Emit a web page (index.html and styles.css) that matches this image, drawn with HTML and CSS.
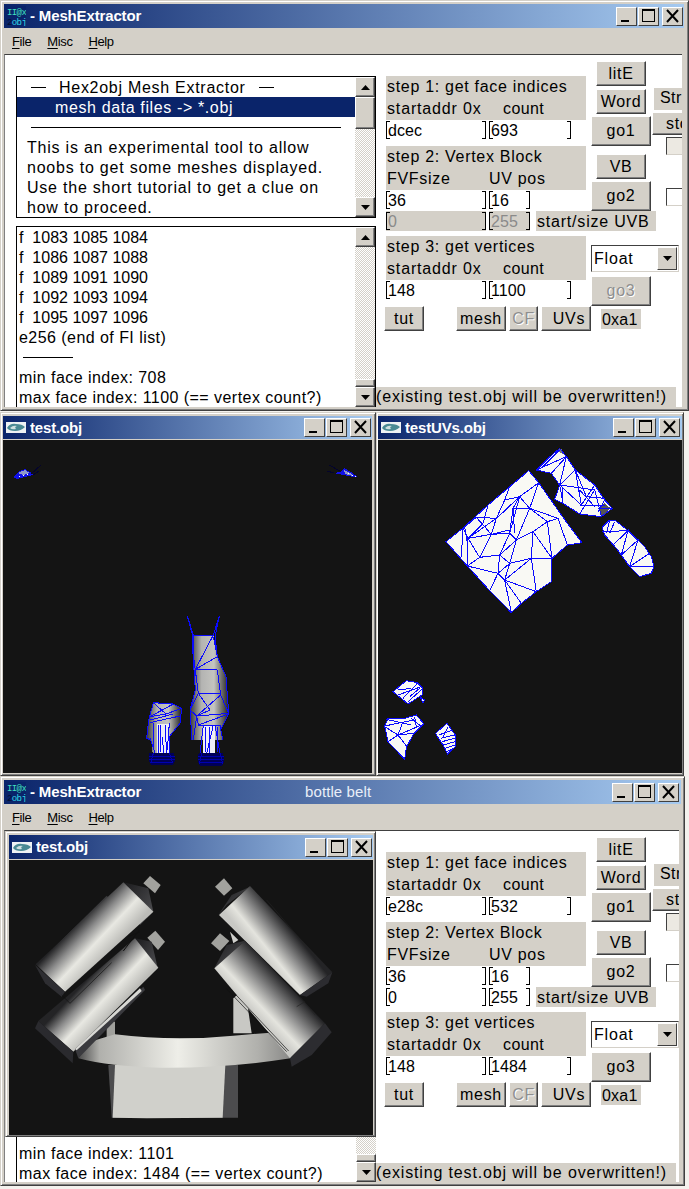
FILE: index.html
```html
<!DOCTYPE html>
<html lang="en">
<head>
<meta charset="utf-8">
<title>MeshExtractor</title>
<link rel="stylesheet" href="styles.css">
</head>
<body>
<svg class="defs" width="0" height="0" aria-hidden="true">
  <defs>
    <linearGradient id="legA" x1="0" x2="1" y1="0" y2="0"><stop offset="0" stop-color="#3a3a3a"/><stop offset=".3" stop-color="#b4b4b2"/><stop offset=".62" stop-color="#c4c4c0"/><stop offset="1" stop-color="#202020"/></linearGradient>
    <linearGradient id="bot1" gradientUnits="userSpaceOnUse" x1="235" y1="440" x2="330" y2="530"><stop offset="0" stop-color="#242426"/><stop offset=".3" stop-color="#8a8a8a"/><stop offset=".62" stop-color="#e8e8e2"/><stop offset="1" stop-color="#bcbcb8"/></linearGradient>
    <linearGradient id="bot2" gradientUnits="userSpaceOnUse" x1="257" y1="619" x2="347" y2="704"><stop offset="0" stop-color="#242426"/><stop offset=".3" stop-color="#8a8a8a"/><stop offset=".62" stop-color="#e8e8e2"/><stop offset="1" stop-color="#bcbcb8"/></linearGradient>
    <linearGradient id="bot3" gradientUnits="userSpaceOnUse" x1="873" y1="463" x2="778" y2="540"><stop offset="0" stop-color="#242426"/><stop offset=".4" stop-color="#8a8a8a"/><stop offset=".75" stop-color="#e4e4de"/><stop offset="1" stop-color="#c8c8c4"/></linearGradient>
    <linearGradient id="bot4" gradientUnits="userSpaceOnUse" x1="855" y1="621" x2="756" y2="715"><stop offset="0" stop-color="#242426"/><stop offset=".4" stop-color="#8a8a8a"/><stop offset=".75" stop-color="#e4e4de"/><stop offset="1" stop-color="#c8c8c4"/></linearGradient>
    <linearGradient id="belt" gradientUnits="userSpaceOnUse" x1="235" y1="0" x2="870" y2="0"><stop offset="0" stop-color="#4a4a4a"/><stop offset=".1" stop-color="#b0b0ac"/><stop offset=".47" stop-color="#eeeee8"/><stop offset=".85" stop-color="#b0b0ac"/><stop offset="1" stop-color="#8a8a88"/></linearGradient>
    <linearGradient id="cap" x1="0" x2="1" y1="0" y2="1"><stop offset="0" stop-color="#1a1a1c"/><stop offset="1" stop-color="#555558"/></linearGradient>
    <symbol id="obj-icon" viewBox="0 0 20 11"><rect width="20" height="11" fill="#eef2f4"/><path d="M1 6 Q4 1 10 2 Q16 2 19 5 Q15 9 9 9 Q3 9 1 6Z" fill="#4a8a94"/><path d="M4 6 Q7 3 11 4 Q8 5 10 7 Q6 8 4 6Z" fill="#cfe0e0"/></symbol>
    <symbol id="app-icon" viewBox="0 0 20 20"><rect width="20" height="20" fill="#0a246a"/><text x="1" y="9" class="icon-text hi">II@x</text><text x="1" y="19" class="icon-text lo"><tspan class="icon-dark">2</tspan>obj</text></symbol>
    <symbol id="up" viewBox="0 0 9 5"><path d="M4.5 0 L9 5 H0Z"/></symbol>
    <symbol id="down" viewBox="0 0 9 5"><path d="M0 0 H9 L4.5 5Z"/></symbol>
    <symbol id="ic-min" viewBox="0 0 19 17"><rect x="4" y="12" width="8" height="2"/></symbol>
    <symbol id="ic-max" viewBox="0 0 19 17"><path d="M3 1H16V14H3ZM4 3V13H15V3Z" fill-rule="evenodd"/></symbol>
    <symbol id="ic-close" viewBox="0 0 19 17"><path d="M4 2 L15 14 M15 2 L4 14" stroke="#000" stroke-width="2" fill="none"/></symbol>
  </defs>
</svg>

<div class="desktop">

<section class="win win-top">
  <header class="titlebar tall">
    <svg class="app-ico"><use href="#app-icon"/></svg>
    <span class="title-text">- MeshExtractor</span>
    <span class="winbtns"><button class="wb"><svg><use href="#ic-min"/></svg></button><button class="wb"><svg><use href="#ic-max"/></svg></button><button class="wb wb-close"><svg><use href="#ic-close"/></svg></button></span>
  </header>
  <nav class="menubar"><span><u>F</u>ile</span><span><u>M</u>isc</span><span><u>H</u>elp</span></nav>
  <div class="client">
    <div class="lists">
      <div class="listbox lb-intro">
        <div class="lb-body">
          <div class="ln ln-head"><span class="dash"></span>Hex2obj Mesh Extractor<span class="dash dash-r"></span></div>
          <div class="ln ln-sel">mesh data files -&gt; *.obj</div>
          <div class="ln ln-rule"><span></span></div>
          <div class="ln ln-indent">This is an experimental tool to allow</div>
          <div class="ln ln-indent">noobs to get some meshes displayed.</div>
          <div class="ln ln-indent">Use the short tutorial to get a clue on</div>
          <div class="ln ln-indent">how to proceed.</div>
        </div>
        <div class="sb">
          <span class="sb-btn"><svg><use href="#up"/></svg></span>
          <span class="sb-thumb th-big"></span>
          <span class="sb-track"></span>
          <span class="sb-btn"><svg><use href="#down"/></svg></span>
        </div>
      </div>
      <div class="listbox lb-log">
        <div class="lb-body">
          <div class="ln ln-num">f&nbsp; 1083 1085 1084</div>
          <div class="ln ln-num">f&nbsp; 1086 1087 1088</div>
          <div class="ln ln-num">f&nbsp; 1089 1091 1090</div>
          <div class="ln ln-num">f&nbsp; 1092 1093 1094</div>
          <div class="ln ln-num">f&nbsp; 1095 1097 1096</div>
          <div class="ln">e256 (end of FI list)</div>
          <div class="ln ln-short"><span></span></div>
          <div class="ln">min face index: 708</div>
          <div class="ln">max face index: 1100 (== vertex count?)</div>
        </div>
        <div class="sb">
          <span class="sb-btn"><svg><use href="#up"/></svg></span>
          <span class="sb-track"></span>
          <span class="sb-thumb th-small"></span>
          <span class="sb-btn"><svg><use href="#down"/></svg></span>
        </div>
      </div>
    </div>
    <div class="form">
      <div class="form-cols">
        <div class="col-a">
          <div class="lbl2"><div>step 1: get face indices</div><div class="pair pair-count"><span>startaddr 0x</span><span>count</span></div></div>
          <div class="inputs"><span class="field f-wide">dcec</span><span class="field f-mid">693</span></div>
          <div class="lbl2 gap6"><div>step 2: Vertex Block</div><div class="pair"><span>FVFsize</span><span>UV pos</span></div></div>
          <div class="inputs"><span class="field f-wide">36</span><span class="field f-small">16</span></div>
          <div class="inputs gap1"><span class="field f-wide off">0</span><span class="field f-small off">255</span><span class="lbl-uvb">start/size UVB</span></div>
          <div class="lbl2 gap5"><div>step 3: get vertices</div><div class="pair pair-count"><span>startaddr 0x</span><span>count</span></div></div>
          <div class="inputs"><span class="field f-wide">148</span><span class="field f-mid">1100</span></div>
          <div class="tools"><button class="btn b-tut">tut</button><button class="btn b-mesh">mesh</button><button class="btn b-cf" disabled>CF</button><button class="btn b-uvs">UVs</button></div>
        </div>
        <div class="col-b">
          <button class="btn b-small">litE</button>
          <button class="btn b-small mt3">Word</button>
          <button class="btn b-go mt2">go1</button>
          <button class="btn b-small mt8">VB</button>
          <button class="btn b-go mt2">go2</button>
          <div class="combo"><span>Float</span><i><svg><use href="#down"/></svg></i></div>
          <button class="btn b-go mt4" disabled>go3</button>
          <span class="lbl-hex">0xa1</span>
        </div>
        <div class="col-c">
          <span class="flat-str">Str</span>
          <button class="btn b-st">sto</button>
          <span class="check"></span>
          <span class="check check-2"></span>
        </div>
      </div>
      <div class="notice">(existing test.obj will be overwritten!)</div>
    </div>
  </div>
</section>

<section class="win win-side win-left">
  <header class="titlebar">
    <svg class="obj-ico"><use href="#obj-icon"/></svg>
    <span class="title-text">test.obj</span>
    <span class="winbtns"><button class="wb"><svg><use href="#ic-min"/></svg></button><button class="wb"><svg><use href="#ic-max"/></svg></button><button class="wb wb-close"><svg><use href="#ic-close"/></svg></button></span>
  </header>
  <div class="viewport">
    <svg class="scene scene-left" viewBox="0 0 369 336">
      <path d="M10 37 L16 31 L22 29 L27 32 L30 35 L22 37 L14 39Z" fill="#1010e8"/>
      <path d="M15 33 L22 30 L27 33 L20 35Z" fill="#9098c8"/>
      <path d="M16 36h1v1h-1z M20 35h1v1h-1z M24 34h1v1h-1z" fill="#fff"/>
      <path d="M28 34 L38 25 M30 35 L36 31" class="wire darkline"/>
      <path d="M355 37 L348 32 L341 28 L337 32 L331 33 L340 35 L350 37Z" fill="#1010e8"/>
      <path d="M341 30 L347 33 L350 36 L342 34Z" fill="#9098c8"/>
      <path d="M345 33h1v1h-1z M349 35h1v1h-1z M352 36h1v1h-1z" fill="#fff"/>
      <path d="M337 31 L326 25 M331 33 L324 31" class="wire darkline"/>
    </svg>
    <svg class="scene scene-legs" viewBox="0 0 360 510">
      <path d="M190 75 H250 L262 140 L288 200 L296 310 L272 360 L278 390 H186 L180 300 L196 240 L190 150Z" fill="url(#legA)"/>
      <path d="M70 278 L130 282 L155 295 L150 340 L118 380 L120 430 H68 L64 390 L50 385 L56 330Z" fill="url(#legA)"/>
      <path d="M80 342 H118 V430 H80Z M218 345 H255 V430 H218Z" fill="#eeeef6"/>
      <path d="M58 430 Q52 464 70 466 H122 Q140 464 132 430Z M206 430 Q198 468 218 469 H268 Q288 468 278 430Z" fill="#000058"/>
      <g class="wire w3">
        <path d="M172 18 L190 75 H250 L268 18 L255 80 L262 140 L288 200 L296 310 L272 360 M172 18 L186 70 L190 150 L196 240 L180 300 L186 390"/>
        <path d="M190 75 L192 150 L205 250 M250 75 L196 178 L262 140 L250 80 M196 178 L262 180 M196 178 L205 250 M262 180 L272 255 M205 250 H272 M205 250 L180 300 M205 250 L240 300 M272 255 L296 310 L200 318 L180 300 M272 255 L200 318 M240 300 L200 318 L205 345 M200 318 L190 390 M296 312 L205 345 M205 345 L270 345 L278 390 M220 345 L210 430 M250 345 L230 430 M255 345 L270 430 M225 350 L225 425 M262 350 L262 425 M240 350 L238 430"/>
        <path d="M70 278 L130 282 L155 295 L150 340 L118 380 L120 430 M70 278 L56 330 L50 385 L64 390 M70 278 L108 312 L60 320 L130 282 M108 312 L155 295 M130 312 L60 330 M60 338 L150 318 M85 345 V430 M70 340 L70 420 M105 345 L110 430 M118 340 L112 420 M60 385 L75 430 M98 380 L100 430 M92 345 L92 425"/>
      </g>
      <g class="wire w3 darkblue">
        <path d="M56 438 H134 M56 448 H134 M60 456 H130 M204 438 H282 M204 448 H282 M208 456 H278 M70 430 L62 460 M118 430 L128 460 M215 430 L208 462 M270 430 L278 462"/>
      </g>
    </svg>
  </div>
</section>

<section class="win win-side win-right">
  <header class="titlebar">
    <svg class="obj-ico"><use href="#obj-icon"/></svg>
    <span class="title-text">testUVs.obj</span>
    <span class="winbtns"><button class="wb"><svg><use href="#ic-min"/></svg></button><button class="wb"><svg><use href="#ic-max"/></svg></button><button class="wb wb-close"><svg><use href="#ic-close"/></svg></button></span>
  </header>
  <div class="viewport">
    <svg class="scene scene-uv" viewBox="0 0 900 1020">
      <g fill="#f9f9f4">
        <path d="M452 92 L482 128 L568 250 L612 308 L568 315 L522 355 L520 425 L475 455 L430 490 L400 518 L335 452 L268 378 L204 305 L260 260 L330 195 L395 140Z"/>
        <path d="M545 25 L565 50 L592 90 L650 135 L680 180 L703 205 L670 230 L605 222 L555 190 L530 178 L545 135 L520 100 L475 90 L510 55Z"/>
        <path d="M695 240 L710 240 L750 272 L800 320 L820 350 L828 378 L820 400 L785 410 L755 380 L715 325 L680 285 L672 262Z"/>
        <path d="M45 755 L85 722 L118 728 L135 745 L132 765 L90 792Z"/>
        <path d="M127 772 L140 780 L135 790Z"/>
        <path d="M20 858 L30 835 L80 835 L115 825 L138 852 L108 880 L85 922 L80 958 L30 905Z"/>
        <path d="M172 880 L207 850 L232 885 L232 920 L208 942 L195 915Z"/>
      </g>
      <path d="M535 30 L550 25 L555 42Z" fill="#777"/>
      <path d="M660 205 L680 190 L698 205 L672 228Z" fill="#555"/>
      <g class="wire w3">
        <path d="M452 92 L482 128 L568 250 L612 308 L568 315 L522 355 L520 425 L475 455 L430 490 L400 518 L335 452 L268 378 L204 305 L260 260 L330 195 L395 140Z"/>
        <path d="M482 128 L425 170 L455 205 L482 128 M425 170 L355 235 L295 232 L255 265 L250 350 M425 170 L405 205 L395 280 L340 283 L270 295 L255 265 M395 140 L380 180 L425 170 L395 280 M380 180 L355 235 L340 283 L305 352 L270 295 L268 378 L305 352 L365 345 L395 280 L415 300 L455 205 L540 235 M455 205 L508 245 L465 275 L415 300 L365 345 L395 370 L415 300 M508 245 L522 355 M465 275 L460 355 L395 370 L360 400 L268 378 M465 275 L522 355 L460 355 L475 455 L380 420 L395 370 M380 420 L360 400 L335 452 M380 420 L400 518 M380 420 L430 490 M460 355 L380 420 M365 345 L360 400 M508 245 L540 235 L568 315 M330 195 L315 250 L270 295 M295 232 L340 283 M405 205 L455 205 M260 260 L268 310 M355 235 L400 195 M270 295 L355 235 M340 283 L395 270 M405 205 L410 280"/>
        <path d="M545 25 L565 50 L592 90 L650 135 L680 180 L703 205 L670 230 L605 222 L555 190 L530 178 L545 135 L520 100 L475 90 L510 55Z"/>
        <path d="M475 90 L565 50 L520 100 M490 85 L545 30 M565 50 L545 135 L592 90 L610 195 L545 135 L650 150 L605 222 L555 190 L545 135 M592 90 L625 170 L680 175 M650 135 L610 195 L680 195 M605 150 L650 200 M650 150 L670 230 M555 140 L552 190 M660 205 L703 205 M680 180 L660 215"/>
        <path d="M695 240 L710 240 L750 272 L800 320 L820 350 L828 378 L820 400 L785 410 L755 380 L715 325 L680 285 L672 262Z"/>
        <path d="M672 275 L750 272 M695 240 L685 280 M705 315 L750 272 L730 345 L780 300 L755 380 L815 340 M755 380 H828 M755 380 L785 410 M710 245 L695 280"/>
        <path d="M45 755 L85 722 L118 728 L135 745 L132 765 L90 792Z M60 765 L130 740 M75 775 L118 730 M90 785 L135 745 M60 750 L100 745 M95 770 L125 745 M127 772 L140 780 L135 790Z"/>
        <path d="M20 858 L30 835 L80 835 L115 825 L138 852 L108 880 L85 922 L80 958 L30 905Z M25 838 L100 855 M20 858 L108 840 M60 885 L138 852 M30 905 L60 885 L85 918 M60 885 L20 860 M60 885 L105 880 M75 845 L60 885 M100 835 L130 860 M110 830 L115 860"/>
        <path d="M172 880 L207 850 L232 885 L232 920 L208 942 L195 915Z M182 885 L225 870 M188 895 L230 885 M192 905 L230 895 M195 915 L232 905 M200 925 L232 915 M205 935 L225 925 M210 860 L195 890"/>
      </g>
    </svg>
  </div>
</section>

<section class="win win-bottom">
  <header class="titlebar tall">
    <svg class="app-ico"><use href="#app-icon"/></svg>
    <span class="title-text">- MeshExtractor</span>
    <span class="title-note">bottle belt</span>
    <span class="winbtns"><button class="wb"><svg><use href="#ic-min"/></svg></button><button class="wb"><svg><use href="#ic-max"/></svg></button><button class="wb wb-close"><svg><use href="#ic-close"/></svg></button></span>
  </header>
  <nav class="menubar"><span><u>F</u>ile</span><span><u>M</u>isc</span><span><u>H</u>elp</span></nav>
  <div class="client">
    <div class="lists lists-b">
      <section class="win win-inner">
        <header class="titlebar">
          <svg class="obj-ico"><use href="#obj-icon"/></svg>
          <span class="title-text">test.obj</span>
          <span class="winbtns"><button class="wb"><svg><use href="#ic-min"/></svg></button><button class="wb"><svg><use href="#ic-max"/></svg></button><button class="wb wb-close"><svg><use href="#ic-close"/></svg></button></span>
        </header>
        <div class="viewport">
          <svg class="scene scene-bottle" viewBox="27 255 1092 825">
            <path d="M700 670 L735 640 L755 775 H700Z" fill="#c8c8c4"/>
            <path d="M690 470 L715 495 L700 505Z" fill="#d0d0cc"/>
            <path d="M320 740 L345 740 V790 H320Z" fill="#a0a09c"/>
            <path d="M325 870 H714 V1028 H335Z" fill="#4c4c4e"/>
            <path d="M345 870 H676 L668 1028 L440 1030 L338 1028Z" fill="#d0d0cb"/>
            <path d="M235 850 L270 800 L345 778 Q520 800 700 782 L850 770 L872 850 Q680 880 480 878 Q330 875 235 850Z" fill="url(#belt)"/>
            <path d="M430 325 L450 303 L482 330 L465 355Z" fill="#a2a29e"/>
            <path d="M442 488 L466 467 L495 500 L474 525Z" fill="#a2a29e"/>
            <path d="M645 335 L672 310 L697 340 L672 362Z" fill="#a2a29e"/>
            <path d="M633 505 L660 475 L688 498 L660 528Z" fill="#a2a29e"/>
            <path d="M370 322 L445 340 L460 410 L420 450Z" fill="url(#cap)"/>
            <path d="M160 520 L320 362 L330 372 L170 530Z" fill="#3a3a3c"/>
            <path d="M370 322 L460 410 L195 650 L107 568Z" fill="url(#bot1)"/>
            <path d="M105 570 L195 650 L185 665 L135 625Z" fill="#2e2e32"/>
            <path d="M405 490 L455 500 L473 578 L440 600Z" fill="url(#cap)"/>
            <path d="M405 490 L475 578 L220 830 L115 738Z" fill="url(#bot2)"/>
            <path d="M115 738 L220 830 L218 865 L105 760Z" fill="#2a2a2e"/>
            <path d="M225 822 L430 635 L435 645 L235 850Z" fill="#3a3a3e"/>
            <path d="M225 822 L420 640 L425 648 L230 826Z" fill="#d8d8d4"/>
            <path d="M185 660 L210 685 L335 563" fill="none" stroke="#111" stroke-width="2"/>
            <path d="M370 528 L418 465 M385 485 L420 470" stroke="#111" stroke-width="3" fill="none"/>
            <path d="M750 335 L695 360 L655 420 L680 390Z" fill="url(#cap)"/>
            <path d="M750 333 L997 592 L900 660 L657 420Z" fill="url(#bot3)"/>
            <path d="M997 592 L900 660 L920 665 L985 625Z" fill="#2c2c30"/>
            <path d="M735 497 L680 510 L643 580Z" fill="url(#cap)"/>
            <path d="M735 497 L975 745 L870 850 L643 580Z" fill="url(#bot4)"/>
            <path d="M975 745 L995 772 L935 840 L875 875 L870 850Z" fill="#2c2c30"/>
            <path d="M685 635 L866 828 M678 640 L860 830" stroke="#111" stroke-width="2" fill="none"/>
            <path d="M890 695 L915 680 M900 665 L945 720 M800 375 L945 545" stroke="#222" stroke-width="2" fill="none"/>
          </svg>
        </div>
      </section>
      <div class="listbox lb-tail">
        <div class="lb-body">
          <div class="ln">min face index: 1101</div>
          <div class="ln">max face index: 1484 (== vertex count?)</div>
        </div>
        <div class="sb">
          <span class="sb-track"></span>
          <span class="sb-thumb th-small"></span>
          <span class="sb-btn"><svg><use href="#down"/></svg></span>
        </div>
      </div>
    </div>
    <div class="form">
      <div class="form-cols">
        <div class="col-a">
          <div class="lbl2"><div>step 1: get face indices</div><div class="pair pair-count"><span>startaddr 0x</span><span>count</span></div></div>
          <div class="inputs"><span class="field f-wide">e28c</span><span class="field f-mid">532</span></div>
          <div class="lbl2 gap6"><div>step 2: Vertex Block</div><div class="pair"><span>FVFsize</span><span>UV pos</span></div></div>
          <div class="inputs"><span class="field f-wide">36</span><span class="field f-small">16</span></div>
          <div class="inputs gap1"><span class="field f-wide">0</span><span class="field f-small">255</span><span class="lbl-uvb">start/size UVB</span></div>
          <div class="lbl2 gap5"><div>step 3: get vertices</div><div class="pair pair-count"><span>startaddr 0x</span><span>count</span></div></div>
          <div class="inputs"><span class="field f-wide">148</span><span class="field f-mid">1484</span></div>
          <div class="tools"><button class="btn b-tut">tut</button><button class="btn b-mesh">mesh</button><button class="btn b-cf" disabled>CF</button><button class="btn b-uvs">UVs</button></div>
        </div>
        <div class="col-b">
          <button class="btn b-small">litE</button>
          <button class="btn b-small mt3">Word</button>
          <button class="btn b-go mt2">go1</button>
          <button class="btn b-small mt8">VB</button>
          <button class="btn b-go mt2">go2</button>
          <div class="combo"><span>Float</span><i><svg><use href="#down"/></svg></i></div>
          <button class="btn b-go mt4">go3</button>
          <span class="lbl-hex">0xa1</span>
        </div>
        <div class="col-c">
          <span class="flat-str">Str</span>
          <button class="btn b-st">sto</button>
          <span class="check"></span>
          <span class="check check-2"></span>
        </div>
      </div>
      <div class="notice">(existing test.obj will be overwritten!)</div>
    </div>
  </div>
</section>

</div>
</body>
</html>
```
FILE: styles.css
```css
* { box-sizing: border-box; }
html, body { margin: 0; padding: 0; background: #fff; }
body { width: 689px; height: 1189px; overflow: hidden; font: 16px/20px "Liberation Sans", Arial, sans-serif; color: #000; }
.defs { position: absolute; }
.desktop { position: relative; width: 689px; height: 1189px; background: #f4f2ee; overflow: hidden; }

.win { position: absolute; display: flex; flex-direction: column; background: #d4d0c8; padding: 3px; border: 1px solid; border-color: #d4d0c8 #404040 #404040 #d4d0c8; box-shadow: inset 1px 1px 0 #fff, inset -1px -1px 0 #808080; }
.win-top { left: 0; top: 0; width: 689px; height: 411px; padding-right: 4px; }
.win-side { padding-bottom: 2px; }
.win-left { left: 0; top: 412px; width: 376px; padding-left: 2px; height: 364px; }
.win-right { left: 376px; top: 412px; width: 308px; height: 364px; padding-left: 1px; padding-right: 1px; }
.win-bottom { left: 0; top: 776px; width: 685px; height: 410px; }

.titlebar { flex: none; display: flex; align-items: center; height: 23px; background: linear-gradient(90deg, #0a246a, #a6caf0); color: #fff; font-weight: 700; font-size: 15px; letter-spacing: -.15px; padding-left: 2px; margin-bottom: 1px; }
.titlebar.tall { height: 24px; margin-bottom: 0; }
.title-text { margin-left: 4px; white-space: pre; }
.title-note { position: absolute; left: 304px; font-weight: 400; font-size: 15px; letter-spacing: .1px; color: #e8eef8; }
.winbtns { margin-left: auto; display: flex; padding-right: 1px; }
.win-right .winbtns, .win-bottom > .titlebar .winbtns { padding-right: 2px; }
.wb { width: 21px; height: 19px; padding: 0; margin-left: 1px; background: #d4d0c8; border: 1px solid; border-color: #fff #404040 #404040 #fff; display: block; }
.wb-close { margin-left: 3px; }
.wb svg { display: block; width: 19px; height: 17px; }
.app-ico { width: 20px; height: 20px; flex: none; }
.icon-text { font: 9px "Liberation Mono", monospace; letter-spacing: -.6px; }
.icon-text.hi { fill: #40e0c0; }
.icon-text.lo { fill: #30d8e8; }
.icon-dark { fill: #041030; }
.obj-ico { width: 20px; height: 11px; flex: none; margin-left: 1px; }

.menubar { flex: none; display: flex; gap: 16px; height: 26px; align-items: center; padding: 1px 0 0 8px; font-size: 13px; letter-spacing: -.4px; }
.menubar u { text-underline-offset: 2px; }

.client { flex: 1; min-height: 0; display: flex; background: #fff; border-top: 1px solid #404040; border-left: 1px solid #808080; margin-right: 2px; overflow: hidden; }
.lists { flex: none; width: 371px; padding: 21px 0 0 11px; display: flex; flex-direction: column; gap: 8px; }
.listbox { display: flex; width: 360px; border: 1px solid #000; background: #fff; }
.lb-intro { height: 142px; flex: none; }
.lb-log { height: 181px; flex: none; border-bottom: 0; }
.lb-body { flex: 1; min-width: 0; overflow: hidden; }
.ln { height: 20px; line-height: 22px; padding-left: 2px; white-space: pre; letter-spacing: .45px; overflow: hidden; }
.ln-num { letter-spacing: 0; }
.ln-head { padding-left: 14px; display: flex; align-items: flex-start; letter-spacing: .72px; }
.dash { width: 15px; height: 1px; background: #000; margin: 10px 13px 0 0; }
.dash-r { margin: 10px 0 0 13px; }
.ln-sel { background: #0a246a; color: #fff; padding-left: 38px; letter-spacing: .62px; }
.ln-rule { display: flex; align-items: center; padding-left: 14px; }
.ln-rule span { width: 310px; height: 1px; background: #000; }
.ln-indent { padding-left: 10px; letter-spacing: .78px; }
.ln-short { display: flex; align-items: center; padding-left: 6px; }
.ln-short span { width: 50px; height: 1px; background: #000; }

.sb { flex: none; width: 20px; display: flex; flex-direction: column; background: repeating-conic-gradient(#d4d0c8 0 25%, #fff 0 50%) 0 0 / 2px 2px; }
.sb-track { flex: 1; }
.sb-btn, .sb-thumb { flex: none; width: 20px; background: #d4d0c8; border: 1px solid; border-color: #fff #404040 #404040 #fff; box-shadow: inset -1px -1px 0 #808080; }
.sb-btn { height: 20px; display: flex; align-items: center; justify-content: center; }
.sb-btn svg { width: 9px; height: 5px; }
.th-big { height: 32px; }
.th-small { height: 8px; }

.form { flex: 1; min-width: 0; display: flex; flex-direction: column; overflow: hidden; position: relative; }
.form-cols { flex: none; height: 332px; display: flex; align-items: flex-start; padding-left: 10px; }
.col-a { flex: none; width: 205px; padding-top: 21px; position: relative; }
.lbl2 { width: 200px; height: 44px; background: #d4d0c8; padding-left: 1px; line-height: 22px; letter-spacing: .7px; white-space: pre; }
.pair { display: flex; }
.pair span:first-child { width: 102px; white-space: pre; }
.pair-count span:first-child { width: 116px; }
.pair-count span { letter-spacing: .85px; }
.pair-count span:last-child { letter-spacing: .4px; }
.gap6 { margin-top: 6px; }
.gap5 { margin-top: 5px; }
.gap1 { margin-top: 1px; }
.inputs { display: flex; height: 20px; }
.field { position: relative; height: 20px; background: #fff; padding-left: 2px; line-height: 22px; letter-spacing: .1px; flex: none; }
.field::before, .field::after { content: ""; position: absolute; top: 1px; bottom: 1px; width: 3px; border: solid #000; border-width: 1px 0 1px 1px; }
.field::before { left: 0; }
.field::after { right: 0; border-width: 1px 1px 1px 0; }
.f-wide { width: 100px; margin-right: 3px; }
.f-mid { width: 82px; }
.f-small { width: 41px; }
.off { background: #d4d0c8; color: #8a8a8a; }
.lbl-uvb { flex: none; margin-left: 6px; width: 120px; height: 20px; background: #d4d0c8; padding-left: 1px; line-height: 22px; white-space: pre; letter-spacing: .8px; }

.btn { display: block; padding: 0; background: #d4d0c8; color: #000; font: inherit; letter-spacing: .7px; border: 1px solid; border-color: #fff #404040 #404040 #fff; box-shadow: inset -1px -1px 0 #808080; text-align: center; }
.btn:disabled { color: #8f8f8f; text-shadow: 1px 1px 0 #fff; }
.tools { display: flex; margin: 6px 0 0 -2px; }
.b-tut { width: 40px; height: 25px; margin-right: 32px; }
.b-mesh { width: 50px; height: 25px; margin-right: 3px; }
.b-cf { width: 29px; height: 25px; margin-right: 3px; }
.b-uvs { width: 50px; height: 25px; padding-left: 6px; }

.col-b { flex: none; width: 60px; padding-top: 6px; display: flex; flex-direction: column; align-items: center; }
.b-small { width: 50px; height: 25px; }
.b-go { width: 60px; height: 30px; }
.mt2 { margin-top: 2px; }
.mt3 { margin-top: 3px; }
.mt4 { margin-top: 4px; }
.mt8 { margin-top: 8px; }
.combo { width: 88px; height: 27px; margin-top: 34px; align-self: flex-start; display: flex; flex: none; background: #fff; border: 1px solid; border-color: #404040 #d4d0c8 #d4d0c8 #404040; padding-left: 2px; position: relative; z-index: 1; line-height: 26px; letter-spacing: .8px; }
.combo span { flex: 1; }
.combo i { width: 20px; background: #d4d0c8; margin: 1px; border: 1px solid; border-color: #fff #404040 #404040 #fff; display: flex; align-items: center; justify-content: center; }
.combo svg { width: 9px; height: 5px; }
.lbl-hex { width: 40px; height: 20px; margin-top: 3px; background: #d4d0c8; align-self: flex-end; padding-left: 1px; line-height: 22px; transform: translateX(-10px); letter-spacing: .2px; }

.col-c { flex: none; width: 30px; margin-left: 1px; padding-top: 33px; display: flex; flex-direction: column; overflow: hidden; height: 220px; }
.flat-str { width: 40px; height: 22px; background: #d4d0c8; padding-left: 6px; margin-left: 2px; flex: none; letter-spacing: .45px; }
.b-st { width: 50px; height: 23px; margin-top: 2px; flex: none; text-align: left; padding-left: 13px; }
.check { flex: none; width: 20px; height: 18px; margin: 2px 0 0 14px; background: #fff; border-bottom: 3px solid #d4d0c8; position: relative; }
.check::before { content: ""; position: absolute; left: 0; top: 0; width: 16px; height: 16px; border: 1px solid; border-color: #404040 #d4d0c8 #d4d0c8 #404040; background: #ece9e2; }
.check-2 { margin-top: 33px; }
.check-2::before { background: #fff; }

.notice { height: 20px; width: 300px; background: #d4d0c8; line-height: 20px; white-space: pre; letter-spacing: .85px; }

.viewport { flex: 1; min-height: 0; background: #141414; position: relative; overflow: hidden; }
.scene { position: absolute; display: block; }
.scene-left { left: 0; top: 0; width: 369px; height: 336px; shape-rendering: crispEdges; }
.scene-legs { left: 127px; top: 170px; width: 120px; height: 170px; shape-rendering: crispEdges; }
.scene-uv { left: 0; top: 0; width: 300px; height: 340px; shape-rendering: crispEdges; }
.scene-bottle { left: 0; top: 0; width: 364px; height: 275px; }
.wire { fill: none; stroke: #0a0aff; stroke-width: 1px; }
.wire.w3 { stroke-width: 3px; }
.wire.darkblue { stroke: #0000b0; }
.wire.darkline { stroke: #04042c; }

.lists-b { width: 371px; padding: 0; gap: 0; }
.win-inner { position: relative; flex: none; width: 371px; height: 306px; padding: 3px 2px 1px 3px; }
.win-inner .titlebar { height: 24px; }
.lb-tail { flex: none; height: 45px; margin-left: 11px; border: 0; border-left: 1px solid #000; }
.lb-tail .lb-body { padding-top: 6px; }
```
